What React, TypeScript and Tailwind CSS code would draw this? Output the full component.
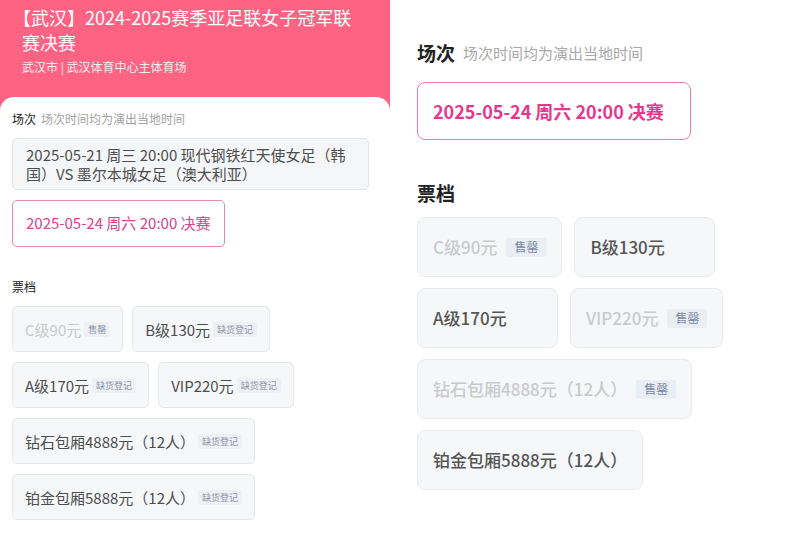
import React from "react";

const font = { fontFamily: '"Noto Sans CJK SC", "Noto Sans", sans-serif' };

type T = { name: string; tag?: string; off?: boolean };

function LTicket({ t }: { t: T }) {
  return (
    <div className="h-[46px] flex items-center px-[12px] rounded-[5px] border border-[#e6e7ea] bg-[#f6f7f9]">
      <span className={`text-[15px] leading-[19px] ${t.off ? "text-[#c8c9cc]" : "text-[#4d4d4d]"}`}>{t.name}</span>
      {t.tag && (
        <span className="ml-[3px] px-[4px] h-[15px] flex items-center text-[9px] leading-none pt-[1px] bg-[#edf0f5] text-[#8a94a8] rounded-[2px]">
          {t.tag}
        </span>
      )}
    </div>
  );
}

function RTicket({ t }: { t: T }) {
  return (
    <div className="h-[60px] min-w-[141px] flex items-center px-[15px] rounded-[8px] border border-[#e9eaed] bg-[#f6f7f9]">
      <span className={`text-[17px] leading-[22px] font-medium ${t.off ? "text-[#c9cacd]" : "text-[#555555]"}`}>{t.name}</span>
      {t.tag && (
        <span className="ml-[9px] px-[8px] h-[19px] flex items-center text-[12px] leading-none bg-[#e9eef5] text-[#7a88a2] rounded-[3px]">
          {t.tag}
        </span>
      )}
    </div>
  );
}

export default function App() {
  return (
    <div className="w-[800px] h-[533px] flex bg-white overflow-hidden" style={font}>
      {/* Left panel */}
      <div className="w-[390px] h-[533px] bg-[#fe6384] flex flex-col">
        <div className="px-[22px] pt-[5px] pb-[22px] text-white">
          <div className="text-[18px] leading-[25px] -ml-[9px]">【武汉】2024-2025赛季亚足联女子冠军联</div>
          <div className="text-[18px] leading-[25px]">赛决赛</div>
          <div className="mt-[4px] text-[12px] leading-[16px] text-white/90">武汉市 | 武汉体育中心主体育场</div>
        </div>
        <div className="flex-1 bg-white rounded-t-[14px] px-[12px] pt-[14px]">
          <div className="flex items-center gap-[5px] h-[16px]">
            <span className="text-[12px] text-[#222]">场次</span>
            <span className="text-[12px] text-[#a3a3a3]">场次时间均为演出当地时间</span>
          </div>
          <div className="mt-[11px] w-[357px] px-[13px] py-[6px] rounded-[5px] border border-[#e3e4e7] bg-[#f5f6f8] text-[15px] leading-[19px] text-[#4d4d4d]">
            2025-05-21 周三 20:00 现代钢铁红天使女足（韩国）VS 墨尔本城女足（澳大利亚）
          </div>
          <div className="mt-[10px] inline-flex h-[47px] items-center px-[13px] rounded-[5px] border border-[#e487b1] text-[15px] text-[#d8448f]">
            2025-05-24 周六 20:00 决赛
          </div>
          <div className="mt-[32px] text-[12px] leading-[16px] text-[#222]">票档</div>
          <div className="mt-[11px] flex flex-col gap-[10px]">
            <div className="flex gap-[9px]">
              <LTicket t={{ name: "C级90元", tag: "售罄", off: true }} />
              <LTicket t={{ name: "B级130元", tag: "缺货登记" }} />
            </div>
            <div className="flex gap-[9px]">
              <LTicket t={{ name: "A级170元", tag: "缺货登记" }} />
              <LTicket t={{ name: "VIP220元", tag: "缺货登记" }} />
            </div>
            <div className="flex">
              <LTicket t={{ name: "钻石包厢4888元（12人）", tag: "缺货登记" }} />
            </div>
            <div className="flex">
              <LTicket t={{ name: "铂金包厢5888元（12人）", tag: "缺货登记" }} />
            </div>
          </div>
        </div>
      </div>
      {/* Right panel */}
      <div className="flex-1 pl-[27px] pt-[40px] flex flex-col">
        <div className="flex items-center gap-[8px] h-[26px]">
          <span className="text-[19px] font-bold text-[#222]">场次</span>
          <span className="text-[15px] text-[#a8a8a8]">场次时间均为演出当地时间</span>
        </div>
        <div className="mt-[16px] self-start w-[274px] h-[58px] flex items-center px-[15px] rounded-[8px] border border-[#f07aae] text-[18px] font-semibold text-[#e8368f]">
          2025-05-24 周六 20:00 决赛
        </div>
        <div className="mt-[40px] h-[26px] flex items-center text-[19px] font-bold text-[#222]">票档</div>
        <div className="mt-[11px] flex flex-col gap-[11px]">
          <div className="flex gap-[12px]">
            <RTicket t={{ name: "C级90元", tag: "售罄", off: true }} />
            <RTicket t={{ name: "B级130元" }} />
          </div>
          <div className="flex gap-[12px]">
            <RTicket t={{ name: "A级170元" }} />
            <RTicket t={{ name: "VIP220元", tag: "售罄", off: true }} />
          </div>
          <div className="flex">
            <RTicket t={{ name: "钻石包厢4888元（12人）", tag: "售罄", off: true }} />
          </div>
          <div className="flex">
            <RTicket t={{ name: "铂金包厢5888元（12人）" }} />
          </div>
        </div>
      </div>
    </div>
  );
}
